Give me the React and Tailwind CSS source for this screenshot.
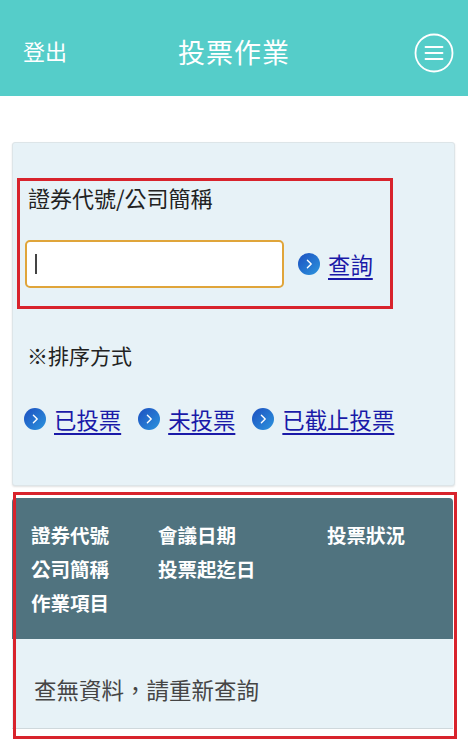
import React from "react";

const font = { fontFamily: '"Noto Sans CJK TC", "Noto Sans", sans-serif' };

function Arrow() {
  return (
    <svg width="22" height="22" viewBox="0 0 22 22" className="shrink-0">
      <defs>
        <linearGradient id="g" x1="0" y1="0" x2="1" y2="1">
          <stop offset="0" stopColor="#1c4fc0" />
          <stop offset="1" stopColor="#2c95de" />
        </linearGradient>
      </defs>
      <circle cx="11" cy="11" r="11" fill="url(#g)" />
      <path d="M9.4 7.2 L13.2 11 L9.4 14.8" fill="none" stroke="#fff" strokeWidth="1.4" strokeLinecap="round" strokeLinejoin="round" />
    </svg>
  );
}

function LinkItem({ text }) {
  return (
    <div className="flex items-center gap-[8px]">
      <Arrow />
      <span className="text-[22.4px] leading-[32px] text-[#1a1aa8] underline underline-offset-[4px] decoration-[1.5px]">{text}</span>
    </div>
  );
}

export default function App() {
  return (
    <div className="w-[468px] h-[756px] bg-white overflow-hidden" style={font}>
      <header className="h-[96px] bg-[#55cdc9] flex items-center relative">
        <span className="absolute left-[23px] top-[35px] text-white text-[22px] leading-[30px]">登出</span>
        <span className="absolute left-[178px] top-[33px] text-white text-[27px] leading-[38px] tracking-[1px]">投票作業</span>
        <svg className="absolute left-[414px] top-[33px]" width="40" height="40" viewBox="0 0 40 40">
          <circle cx="20" cy="20" r="18.5" fill="none" stroke="#fff" strokeWidth="1.8" />
          <path d="M11.5 14 H28.5 M11.5 20 H28.5 M11.5 26 H28.5" stroke="#fff" strokeWidth="1.8" strokeLinecap="round" />
        </svg>
      </header>

      <main className="pt-[46px] px-[12px]">
        <section className="relative w-[443px] bg-[#e7f2f7] border border-[#dde5e8] rounded-[3px] shadow-[0_1px_2px_rgba(0,0,0,0.12)] pl-[11px] pt-[40px] pb-[50px]">
          <div className="pl-[4px] text-[22px] leading-[28px] text-[#222]">證券代號/公司簡稱</div>
          <div className="mt-[29px] flex items-center">
            <div className="ml-[1px] w-[259px] h-[48px] bg-white border-2 border-[#e0a53a] rounded-[5px] flex items-center pl-[8px]">
              <div className="w-[2px] h-[20px] bg-[#444]" />
            </div>
            <div className="ml-[14px]">
              <LinkItem text="查詢" />
            </div>
          </div>
          <div className="mt-[53px] pl-[3px] text-[21px] leading-[28px] text-[#222]">※排序方式</div>
          <div className="mt-[34px] flex items-center gap-[17px]">
            <LinkItem text="已投票" />
            <LinkItem text="未投票" />
            <LinkItem text="已截止投票" />
          </div>
          <div className="absolute left-[4px] top-[35px] w-[376px] h-[131px] border-[3px] border-[#d8232c] pointer-events-none" />
        </section>

        <section className="relative mt-[12px] w-[441px]">
          <div className="bg-[#50737f] rounded-t-[4px] h-[141px] pt-[20px] pl-[19px] grid grid-cols-[127px_169px_1fr] text-white font-bold text-[19.5px] leading-[34px]">
            <div>
              <div>證券代號</div>
              <div>公司簡稱</div>
              <div>作業項目</div>
            </div>
            <div>
              <div>會議日期</div>
              <div>投票起迄日</div>
            </div>
            <div>投票狀況</div>
          </div>
          <div className="bg-[#e7f2f7] h-[90px] border-b border-[#cfd8dc] pt-[36px] pl-[22px] text-[22.5px] leading-[28px] text-[#454545]">
            查無資料，請重新查詢
          </div>
          <div className="absolute left-[1px] top-[-6px] w-[444px] h-[247px] border-[3px] border-[#d8232c] pointer-events-none" />
        </section>
      </main>
    </div>
  );
}
